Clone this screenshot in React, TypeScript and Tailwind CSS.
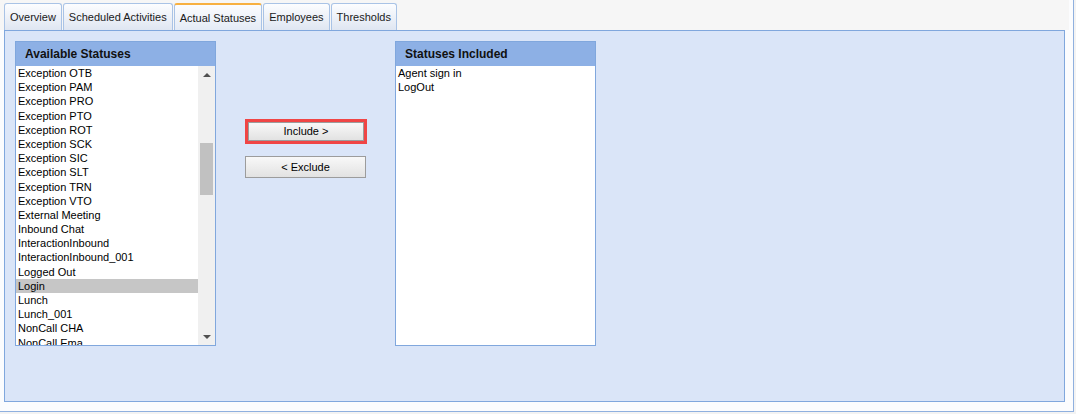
const tabs = ["Overview", "Scheduled Activities", "Actual Statuses", "Employees", "Thresholds"];

const available = [
  "Exception OTB",
  "Exception PAM",
  "Exception PRO",
  "Exception PTO",
  "Exception ROT",
  "Exception SCK",
  "Exception SIC",
  "Exception SLT",
  "Exception TRN",
  "Exception VTO",
  "External Meeting",
  "Inbound Chat",
  "InteractionInbound",
  "InteractionInbound_001",
  "Logged Out",
  "Login",
  "Lunch",
  "Lunch_001",
  "NonCall CHA",
  "NonCall Ema",
];

const included = ["Agent sign in", "LogOut"];

const font = { fontFamily: "'Liberation Sans', Arial, sans-serif" };

const ListHeader = ({ title }: { title: string }) => (
  <div className="h-[24px] bg-[#8db0e5] pl-[9px] flex items-center text-[12px] font-bold text-[#111]">
    {title}
  </div>
);

const App = () => {
  return (
    <div className="w-[1076px] h-[414px] bg-[#f3f3f3] text-[11px] text-black" style={font}>
      <div className="w-[1074px] h-[412px] bg-[#fbfcfe] border-r border-b border-[#8fb0df] flex flex-col">
        {/* Tab strip */}
        <div className="w-[1069px] h-[30px] bg-[#f6f6f6] flex items-end gap-[1px] pl-[4px]">
          {tabs.map(tab => {
            const active = tab === "Actual Statuses";
            return (
              <div
                key={tab}
                className={
                  active
                    ? "h-[27px] px-[5px] pt-[1px] flex items-center rounded-t-[3px] border border-b-0 border-[#a9c3e6] border-t-2 border-t-[#f7b041] bg-gradient-to-b from-[#fbfcfe] to-[#e4ebf6] text-[#1a1a1a] text-[11px]"
                    : "h-[27px] px-[5px] pt-[1px] flex items-center rounded-t-[3px] border border-b-0 border-[#a9c3e6] bg-gradient-to-b from-[#fcfdff] to-[#dfe6f2] text-[#1a1a1a] text-[11px]"
                }
              >
                {tab}
              </div>
            );
          })}
        </div>

        {/* Panel */}
        <div className="ml-[4px] w-[1061px] h-[372px] bg-[#dae5f8] border border-[#80a7dd] pt-[10px] pl-[10px] flex items-start">
          {/* Available statuses */}
          <div className="w-[201px] h-[305px] border border-[#80a7dd] bg-white flex flex-col">
            <ListHeader title="Available Statuses" />
            <div className="flex-1 flex overflow-hidden">
              <div className="flex-1 overflow-hidden">
                {available.map(item => (
                  <div
                    key={item}
                    className={
                      item === "Login"
                        ? "h-[14.2px] leading-[14.2px] pl-[2px] bg-[#c6c6c6] whitespace-nowrap"
                        : "h-[14.2px] leading-[14.2px] pl-[2px] whitespace-nowrap"
                    }
                  >
                    {item}
                  </div>
                ))}
              </div>
              <div className="w-[17px] bg-[#f0f0f0] flex flex-col items-center">
                <div className="h-[17px] flex items-center justify-center">
                  <div className="w-0 h-0 border-l-[4px] border-r-[4px] border-b-[4px] border-l-transparent border-r-transparent border-b-[#505050]" />
                </div>
                <div className="mt-[60px] w-[13px] h-[52px] bg-[#c1c1c1]" />
                <div className="flex-1" />
                <div className="h-[17px] flex items-center justify-center">
                  <div className="w-0 h-0 border-l-[4px] border-r-[4px] border-t-[4px] border-l-transparent border-r-transparent border-t-[#505050]" />
                </div>
              </div>
            </div>
          </div>

          {/* Buttons */}
          <div className="ml-[29px] mt-[78px] w-[122px] flex flex-col">
            <div className="border-[3px] border-[#f04545] w-[122px] h-[25px]">
              <button className="w-full h-full border border-[#9c9c9c] bg-gradient-to-b from-[#f8f8f8] to-[#e2e2e2] text-[11px] leading-none">
                Include &gt;
              </button>
            </div>
            <button className="mt-[12px] w-[121px] h-[22px] border border-[#9c9c9c] bg-gradient-to-b from-[#f8f8f8] to-[#e2e2e2] text-[11px] leading-none">
              &lt; Exclude
            </button>
          </div>

          {/* Statuses included */}
          <div className="ml-[28px] w-[201px] h-[305px] border border-[#80a7dd] bg-white flex flex-col">
            <ListHeader title="Statuses Included" />
            <div>
              {included.map(item => (
                <div key={item} className="h-[14.2px] leading-[14.2px] pl-[2px]">
                  {item}
                </div>
              ))}
            </div>
          </div>
        </div>
      </div>
    </div>
  );
};

export default App;
